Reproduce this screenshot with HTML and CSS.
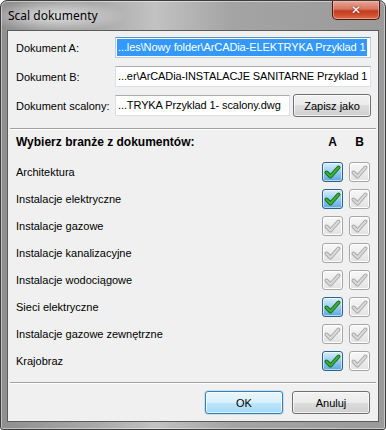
FILE: index.html
```html
<!DOCTYPE html>
<html lang="pl">
<head>
  <meta charset="UTF-8">
  <title>Scal dokumenty</title>
  <link rel="stylesheet" href="styles.css">
</head>
<body>
  <div class="window">
    <div class="titlebar">
      <span class="title">Scal dokumenty</span>
      <button class="close">&#x2715;</button>
    </div>

    <div class="client">
      <div class="files">
        <label>Dokument A:</label>
        <div class="field focused"><span class="sel">...les\Nowy folder\ArCADia-ELEKTRYKA Przyklad 1</span></div>

        <label>Dokument B:</label>
        <div class="field">...er\ArCADia-INSTALACJE SANITARNE Przyklad 1</div>

        <label>Dokument scalony:</label>
        <div class="field-row">
          <div class="field">...TRYKA Przyklad 1- scalony.dwg</div>
          <button class="btn">Zapisz jako</button>
        </div>
      </div>

      <div class="sep"></div>

      <div class="head">
        <span>Wybierz branże z dokumentów:</span>
        <span class="col">A</span>
        <span class="col">B</span>
      </div>

      <div class="list" id="list"></div>

      <div class="sep"></div>

      <div class="actions">
        <button class="btn default">OK</button>
        <button class="btn">Anuluj</button>
      </div>
    </div>
  </div>

  <script>
    // branch name, checked in A
    const branches = [
      ["Architektura", true],
      ["Instalacje elektryczne", true],
      ["Instalacje gazowe", false],
      ["Instalacje kanalizacyjne", false],
      ["Instalacje wodociągowe", false],
      ["Sieci elektryczne", true],
      ["Instalacje gazowe zewnętrzne", false],
      ["Krajobraz", true]
    ];

    const tick = '<svg viewBox="0 0 21 20" width="21" height="20"><path d="M4.5 10.5 L8.5 14.5 L16.5 5.5" fill="none" class="tick-o"/><path d="M4.5 10.5 L8.5 14.5 L16.5 5.5" fill="none" class="tick-i"/></svg>';

    const list = document.getElementById('list');
    branches.forEach(function (b) {
      const row = document.createElement('div');
      row.className = 'row';
      row.innerHTML =
        '<span class="name">' + b[0] + '</span>' +
        '<span class="check' + (b[1] ? ' on' : '') + '">' + tick + '</span>' +
        '<span class="check">' + tick + '</span>';
      list.appendChild(row);
    });
  </script>
</body>
</html>
```

FILE: styles.css
```css
body {
  margin: 0;
  background: #fff;
}
.window {
  box-sizing: border-box;
  width: 386px;
  height: 430px;
  border: 1px solid #3d3d3d;
  border-radius: 7px 7px 3px 3px;
  padding: 0 6px 7px 6px;
  display: flex;
  flex-direction: column;
  background:
    radial-gradient(ellipse 70px 16px at 55px 15px, rgba(235, 235, 235, 0.85), rgba(235, 235, 235, 0) 100%),
    linear-gradient(90deg, #8f8f8f 0%, #a9a9a9 25%, #c2c2c2 40%, #a4a4a4 60%, #9a9a9a 100%);
  box-shadow: inset 0 0 0 1px rgba(255, 255, 255, 0.45);
}
.titlebar {
  height: 29px;
  display: flex;
  align-items: flex-start;
  justify-content: space-between;
}
.title {
  font-family: "Noto Sans", sans-serif;
  font-size: 12px;
  color: #000;
  margin-top: 6px;
  margin-left: 1px;
}
.close {
  width: 48px;
  height: 19px;
  margin-right: -1px;
  padding: 0;
  border: 1px solid #4a1a12;
  border-top: none;
  border-radius: 0 0 5px 5px;
  background: linear-gradient(#e7a596 0%, #d7755f 45%, #c23b1f 55%, #d0502f 80%, #e0704f 100%);
  box-shadow: inset 0 0 0 1px rgba(255, 200, 190, 0.5);
  color: #fff;
  font-family: "DejaVu Sans", sans-serif;
  font-weight: bold;
  font-size: 12px;
  line-height: 17px;
  text-shadow: 0 0 2px #5a1a10;
}
.client {
  flex: 1;
  background: #f0f0f0;
  border: 1px solid #5c5c5c;
  font-family: "Liberation Sans", Arial, sans-serif;
  font-size: 11px;
  color: #000;
  display: flex;
  flex-direction: column;
}
.files {
  display: grid;
  grid-template-columns: 99px minmax(0, 1fr);
  grid-auto-rows: 21px;
  row-gap: 8px;
  align-items: center;
  padding: 6px 7px 0 8px;
}
.field {
  box-sizing: border-box;
  min-width: 0;
  height: 21px;
  background: #fff;
  border: 1px solid #dbdfe6;
  border-top-color: #abadb3;
  padding: 0 2px;
  line-height: 19px;
  letter-spacing: -0.1px;
  white-space: nowrap;
  overflow: hidden;
}
.field.focused {
  border-color: #b5cfe7;
  border-top-color: #5d8fc0;
  padding: 1px 1px;
  line-height: 17px;
}
.sel {
  display: inline-block;
  background: #3399ff;
  color: #fff;
  padding: 0 1px;
}
.field-row {
  display: flex;
  align-items: center;
  gap: 3px;
  min-width: 0;
}
.field-row .field {
  flex: 1;
}
.btn {
  box-sizing: border-box;
  flex: none;
  width: 78px;
  height: 23px;
  padding: 0;
  border: 1px solid #707070;
  border-radius: 3px;
  background: linear-gradient(#f2f2f2 0%, #ebebeb 50%, #dddddd 50%, #cfcfcf 100%);
  box-shadow: inset 0 0 0 1px rgba(255, 255, 255, 0.7);
  font-family: "Liberation Sans", Arial, sans-serif;
  font-size: 11px;
  color: #000;
}
.btn.default {
  border-color: #3c7fb1;
  background: linear-gradient(#eaf6fd 0%, #d9f0fc 50%, #bee6fd 50%, #a7d9f5 100%);
  box-shadow: inset 0 0 0 1px rgba(255, 255, 255, 0.6), 0 0 0 1px rgba(120, 190, 240, 0.35);
}
.sep {
  height: 1px;
  background: #a0a0a0;
  border-bottom: 1px solid #fff;
  margin: 0 2px;
}
.files + .sep {
  margin-top: 12px;
}
.head {
  display: grid;
  grid-template-columns: 1fr 21px 21px;
  column-gap: 6px;
  padding: 5px 8px 0 8px;
  height: 14px;
  font-size: 12px;
  font-weight: bold;
  line-height: 14px;
}
.col {
  text-align: center;
}
.list {
  display: flex;
  flex-direction: column;
  gap: 7px;
  padding: 13px 8px 0 8px;
  margin-bottom: 11px;
}
.row {
  display: grid;
  grid-template-columns: 1fr 21px 21px;
  column-gap: 6px;
  align-items: center;
  height: 20px;
}
.check {
  box-sizing: border-box;
  width: 21px;
  height: 20px;
  border: 1px solid #a6a6a6;
  border-radius: 3px;
  background: linear-gradient(#f8f8f8, #e2e2e2);
  box-shadow: inset 0 0 0 1px #fff;
}
.check svg {
  display: block;
  margin: -1px;
}
.tick-o {
  stroke: #a8a8a8;
  stroke-width: 4;
  stroke-linecap: round;
  stroke-linejoin: round;
}
.tick-i {
  stroke: #dadada;
  stroke-width: 2;
  stroke-linecap: round;
  stroke-linejoin: round;
}
.check.on {
  border-color: #2c628b;
  background: linear-gradient(#d8eefb 0%, #9fd0f1 45%, #5aa8e0 100%);
  box-shadow: inset 0 0 0 1px rgba(255, 255, 255, 0.55);
}
.check.on .tick-o {
  stroke: #1d6a1d;
}
.check.on .tick-i {
  stroke: #39b239;
}
.actions {
  display: flex;
  justify-content: flex-end;
  gap: 9px;
  padding: 7px 8px 0 0;
}
```
